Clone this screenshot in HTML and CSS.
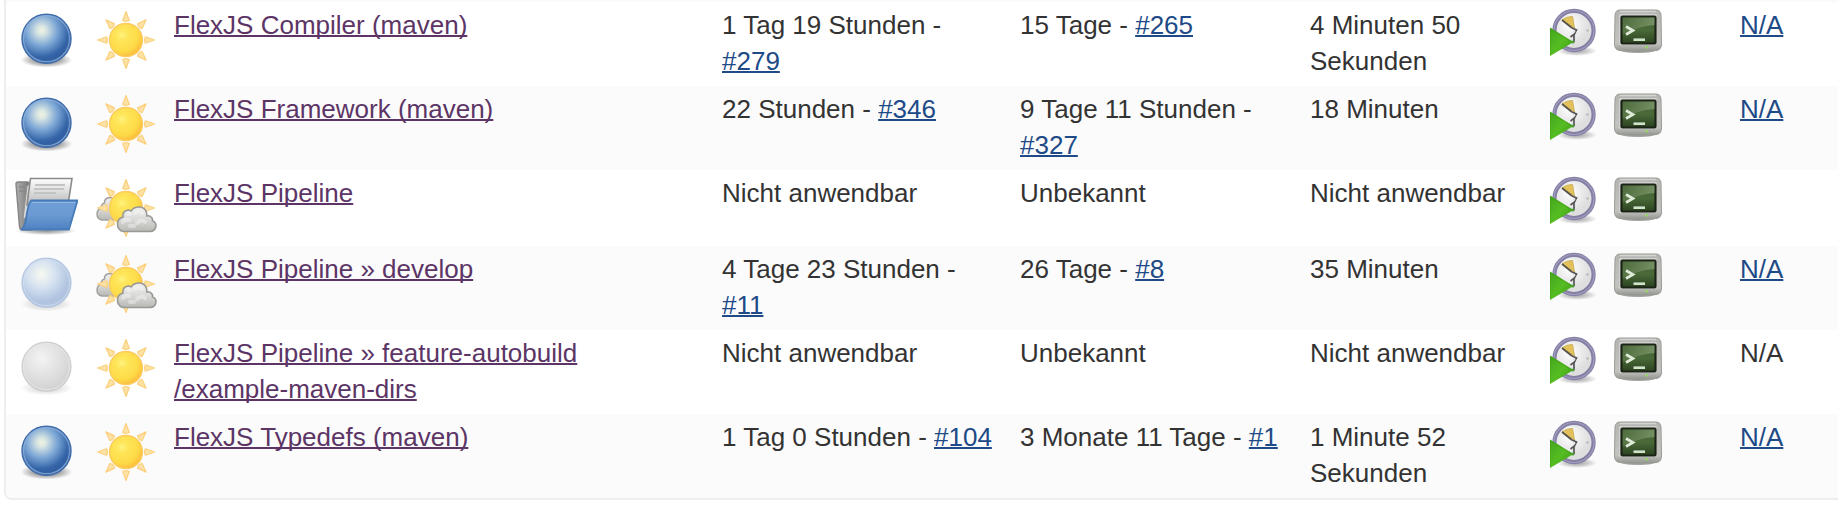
FILE: index.html
```html
<!DOCTYPE html>
<html lang="de">
<head>
<meta charset="utf-8">
<title>FlexJS Jobs</title>
<link rel="stylesheet" href="styles.css">
</head>
<body>
<svg class="sprite" aria-hidden="true">
  <defs>
    <radialGradient id="g-blue" cx=".4" cy=".33" r=".66"><stop offset="0" stop-color="#eff3df"/><stop offset=".13" stop-color="#dbe7e3"/><stop offset=".48" stop-color="#7ba6d5"/><stop offset=".82" stop-color="#3565a8"/><stop offset="1" stop-color="#2f5c9e"/></radialGradient>
    <radialGradient id="g-pale" cx=".4" cy=".33" r=".66"><stop offset="0" stop-color="#f8faf0"/><stop offset=".45" stop-color="#d3e0f0"/><stop offset=".85" stop-color="#b0c3e0"/><stop offset="1" stop-color="#b0c3e0"/></radialGradient>
    <radialGradient id="g-gray" cx=".4" cy=".33" r=".66"><stop offset="0" stop-color="#f3f3f3"/><stop offset=".5" stop-color="#e3e3e3"/><stop offset="1" stop-color="#d2d2d2"/></radialGradient>
    <radialGradient id="g-shadow"><stop offset="0" stop-color="#000" stop-opacity=".6"/><stop offset=".6" stop-color="#000" stop-opacity=".28"/><stop offset="1" stop-color="#000" stop-opacity="0"/></radialGradient>
    <radialGradient id="g-sun" cx=".38" cy=".35" r=".7"><stop offset="0" stop-color="#fff27e"/><stop offset=".25" stop-color="#fee559"/><stop offset=".7" stop-color="#fddb47"/><stop offset="1" stop-color="#fcb83a"/></radialGradient>
    <linearGradient id="g-cloud" x2="0" y2="1"><stop offset="0" stop-color="#f0f0f0"/><stop offset=".5" stop-color="#dadad8"/><stop offset="1" stop-color="#b8b8b5"/></linearGradient>
    <linearGradient id="g-folder" x2="0" y2="1"><stop offset="0" stop-color="#6f9fd6"/><stop offset=".5" stop-color="#6b9ad2"/><stop offset="1" stop-color="#4f82c2"/></linearGradient>
    <linearGradient id="g-back" x2="1"><stop offset="0" stop-color="#b0b0b0"/><stop offset="1" stop-color="#6c6c6c"/></linearGradient>
    <linearGradient id="g-paper" x2="0" y2="1"><stop offset="0" stop-color="#fff"/><stop offset="1" stop-color="#b9b9b9"/></linearGradient>
    <radialGradient id="g-face" cx=".4" cy=".35"><stop offset="0" stop-color="#fff"/><stop offset="1" stop-color="#dedede"/></radialGradient>
    <linearGradient id="g-play" x2="1" y2="1"><stop offset="0" stop-color="#43a51c"/><stop offset=".5" stop-color="#55bd22"/><stop offset="1" stop-color="#3c9613"/></linearGradient>
    <linearGradient id="g-case" x2="0" y2="1"><stop offset="0" stop-color="#b5b6b2"/><stop offset=".8" stop-color="#c2c3bf"/><stop offset="1" stop-color="#8f918b"/></linearGradient>
    <linearGradient id="g-screen" x2="0" y2="1"><stop offset="0" stop-color="#3f5c30"/><stop offset=".5" stop-color="#4a6a38"/><stop offset="1" stop-color="#2b4220"/></linearGradient>
    <linearGradient id="g-glare" x1="0" x2="1"><stop offset="0" stop-color="#9db58a" stop-opacity=".15"/><stop offset="1" stop-color="#a6bd94" stop-opacity=".5"/></linearGradient>
  </defs>
  <symbol id="ball-blue" viewBox="0 0 64 64"><ellipse cx="32.500" cy="52" rx="26" ry="7.500" fill="url(#g-shadow)"/><circle cx="32.500" cy="30.700" r="24.500" fill="url(#g-blue)" stroke="#3f6cab" stroke-width="1.400"/><circle cx="32.500" cy="30.700" r="23" fill="none" stroke="#8fb1dc" stroke-width="1.200" opacity=".75"/></symbol>
  <symbol id="ball-pale" viewBox="0 0 64 64"><ellipse cx="32.500" cy="52" rx="26" ry="7.500" fill="url(#g-shadow)" opacity=".3"/><circle cx="32.500" cy="30.700" r="24.500" fill="url(#g-pale)" stroke="#b3c5e0" stroke-width="1.200"/><circle cx="32.500" cy="30.700" r="23" fill="none" stroke="#d3dfef" opacity=".8"/></symbol>
  <symbol id="ball-gray" viewBox="0 0 64 64"><ellipse cx="32.500" cy="52" rx="26" ry="7.500" fill="url(#g-shadow)" opacity=".3"/><circle cx="32.500" cy="30.700" r="24.500" fill="url(#g-gray)" stroke="#cecece" stroke-width="1.200"/><circle cx="32.500" cy="30.700" r="23" fill="none" stroke="#e6e6e6"/></symbol>
  <symbol id="sun" viewBox="0 0 64 64">
    <g fill="#fce2a4" stroke="#fcd07f" stroke-width="1.200" stroke-linejoin="round">
      <path id="ray" d="M32 3.500 L35.300 12.500 Q32 14.500 28.700 12.500Z"/>
      <use href="#ray" transform="rotate(45 32 32)"/><use href="#ray" transform="rotate(90 32 32)"/><use href="#ray" transform="rotate(135 32 32)"/><use href="#ray" transform="rotate(180 32 32)"/><use href="#ray" transform="rotate(225 32 32)"/><use href="#ray" transform="rotate(270 32 32)"/><use href="#ray" transform="rotate(315 32 32)"/>
    </g>
    <circle cx="32" cy="32" r="16.500" fill="url(#g-sun)" stroke="#fccb62" stroke-width="1.400"/>
  </symbol>
  <symbol id="cloudy" viewBox="0 0 64 64">
    <path d="M8 44 Q3 43 3 38 Q3 33.500 7 32.500 Q7 28 10.500 27 Q10 22 16 21.500 Q23 22 24 29 L26 44Z" fill="url(#g-cloud)" stroke="#a2a29e" stroke-width="1.500"/>
    <use href="#sun"/>
    <path d="M29 55.500 Q23.500 54 23.500 48 Q23.500 42.500 29 41 Q28 35 34 34 Q36 34 37 35 Q40 30.500 46 31 Q53 32 53 40 Q56 39 58 42 Q59 43.500 58.500 45 Q62 46 62 50 Q61 55.500 56 55.500Z" fill="url(#g-cloud)" stroke="#999995" stroke-width="1.600"/>
    <path d="M29 46 Q31 43 35 44 M34 38 Q35 37 36 38 M41 37 Q44 34 48 37 M43 47 Q47 43 51 46 M36 50H40" fill="none" stroke="#fafafa" stroke-width="4" stroke-linecap="round" opacity=".4"/>
  </symbol>
  <symbol id="folder" viewBox="0 0 64 64">
    <ellipse cx="32" cy="55" rx="30" ry="4" fill="url(#g-shadow)" opacity=".7"/>
    <path d="M2 8 Q2 6 4 6 L14 6 L18 12 L18 54 L8 54 Q6 54 5.500 51Z" fill="url(#g-back)" stroke="#848484" stroke-width="1.400"/>
    <path d="M5 11H13M5 15H13" stroke="#888" stroke-width="1.500"/>
    <path d="M13 10 L17 7 L50 8 L48 30 L9 43Z" fill="#d9d9d9" stroke="#929292"/>
    <path d="M16.500 2.500 H58 L54 29 H13Z" fill="url(#g-paper)" stroke="#8b8b8b" stroke-width="1.600"/>
    <path d="M21 9H51M20 13H50M20 17H42" stroke="#c4c4c4" stroke-width="1.800"/>
    <path d="M17 24.500 H63.500 L55 53.500 H7.500 Q11 50 12 43 Q14 28 17 24.500Z" fill="url(#g-folder)" stroke="#477bb8" stroke-width="1.800" stroke-linejoin="round"/>
    <path d="M18.500 26.500H61" stroke="#91b9e6" stroke-width="1.200"/>
  </symbol>
  <symbol id="clock" viewBox="0 0 48 48">
    <ellipse cx="27" cy="43" rx="20" ry="5" fill="url(#g-shadow)" opacity=".6"/>
    <circle cx="24" cy="22.500" r="19.600" fill="url(#g-face)" stroke="#8480a5" stroke-width="4.200"/>
    <circle cx="24" cy="22.500" r="20" fill="none" stroke="#9f9cbd" stroke-width="1.200"/>
    <path d="M12 12 Q16 8.500 22.500 8.500 L24.500 20Z" fill="#e3c25c" stroke="#cfb059"/>
    <path d="M12 12 L22 20" stroke="#575347" stroke-width="1.800"/>
    <path d="M22 20 L26.500 22 L24.500 26 L20.500 29 M24 26V34" fill="none" stroke="#555" stroke-width="1.700"/>
    <circle cx="24" cy="23.500" r="1.300" fill="#e4e4e4"/>
    <circle cx="37.500" cy="22.500" r="1.200" fill="#b8b8b8"/>
    <path d="M0 19.500 L23.500 34 L0 48Z" fill="url(#g-play)"/>
    <path d="M0 48V20.500L22 34" fill="none" stroke="#348815" stroke-opacity=".4"/>
    <circle cx="23" cy="34" r="1.500" fill="#4c9a35"/>
  </symbol>
  <symbol id="terminal" viewBox="0 0 48 48">
    <path d="M4 41 H44 Q41 45 24 45 Q7 45 4 41Z" fill="#a9aaa5"/>
    <path d="M6 2 H42 Q46.500 2 47 7 L47.500 36 Q47.500 42 42 42.500 Q24 45 6 42.500 Q.5 42 .5 36 L1 7 Q1.500 2 6 2Z" fill="url(#g-case)" stroke="#999b95"/>
    <path d="M6 3.500H42" stroke="#d4d4d1" stroke-width="1.500"/>
    <rect x="5" y="6" width="38" height="31" rx="2" fill="#d0d1ce"/>
    <rect x="7.500" y="8.500" width="34" height="27" rx="1" fill="url(#g-screen)" stroke="#1b2417" stroke-width="2.200"/>
    <path d="M8.500 9.500H40.500V17Q24 18 8.500 27Z" fill="url(#g-glare)"/>
    <path d="M12 18.500 L19 22.500 L12 26.500" fill="none" stroke="#dfead9" stroke-width="2.600"/>
    <path d="M19.500 31.700H31" stroke="#d3e2cb" stroke-width="2.600"/>
    <circle cx="32.500" cy="39.200" r="1.300" fill="#91d85c"/>
  </symbol>
</svg>

<div class="panel">
<table class="jobs">
  <colgroup><col class="c-icon"><col class="c-icon"><col><col class="c-success"><col class="c-failure"><col class="c-duration"><col class="c-actions"><col class="c-coverage"></colgroup>
  <tbody>
    <tr>
      <td><svg class="icon" role="img" aria-label="Erfolgreich"><use href="#ball-blue"/></svg></td>
      <td><svg class="icon" role="img" aria-label="Sonnig"><use href="#sun"/></svg></td>
      <td><a class="job" href="#">FlexJS Compiler (maven)</a></td>
      <td>1 Tag 19 Stunden - <a href="#">#279</a></td>
      <td>15 Tage - <a href="#">#265</a></td>
      <td>4 Minuten 50 Sekunden</td>
      <td><div class="actions"><a href="#" aria-label="Build planen"><svg><use href="#clock"/></svg></a><a href="#" aria-label="Konsole"><svg><use href="#terminal"/></svg></a></div></td>
      <td><a href="#">N/A</a></td>
    </tr>
    <tr>
      <td><svg class="icon" role="img" aria-label="Erfolgreich"><use href="#ball-blue"/></svg></td>
      <td><svg class="icon" role="img" aria-label="Sonnig"><use href="#sun"/></svg></td>
      <td><a class="job" href="#">FlexJS Framework (maven)</a></td>
      <td>22 Stunden - <a href="#">#346</a></td>
      <td>9 Tage 11 Stunden - <a href="#">#327</a></td>
      <td>18 Minuten</td>
      <td><div class="actions"><a href="#" aria-label="Build planen"><svg><use href="#clock"/></svg></a><a href="#" aria-label="Konsole"><svg><use href="#terminal"/></svg></a></div></td>
      <td><a href="#">N/A</a></td>
    </tr>
    <tr>
      <td><svg class="icon" role="img" aria-label="Ordner"><use href="#folder"/></svg></td>
      <td><svg class="icon" role="img" aria-label="Bewölkt"><use href="#cloudy"/></svg></td>
      <td><a class="job" href="#">FlexJS Pipeline</a></td>
      <td>Nicht anwendbar</td>
      <td>Unbekannt</td>
      <td>Nicht anwendbar</td>
      <td><div class="actions"><a href="#" aria-label="Build planen"><svg><use href="#clock"/></svg></a><a href="#" aria-label="Konsole"><svg><use href="#terminal"/></svg></a></div></td>
      <td></td>
    </tr>
    <tr>
      <td><svg class="icon" role="img" aria-label="Läuft"><use href="#ball-pale"/></svg></td>
      <td><svg class="icon" role="img" aria-label="Bewölkt"><use href="#cloudy"/></svg></td>
      <td><a class="job" href="#">FlexJS Pipeline » develop</a></td>
      <td>4 Tage 23 Stunden - <a href="#">#11</a></td>
      <td>26 Tage - <a href="#">#8</a></td>
      <td>35 Minuten</td>
      <td><div class="actions"><a href="#" aria-label="Build planen"><svg><use href="#clock"/></svg></a><a href="#" aria-label="Konsole"><svg><use href="#terminal"/></svg></a></div></td>
      <td><a href="#">N/A</a></td>
    </tr>
    <tr>
      <td><svg class="icon" role="img" aria-label="Nicht gebaut"><use href="#ball-gray"/></svg></td>
      <td><svg class="icon" role="img" aria-label="Sonnig"><use href="#sun"/></svg></td>
      <td><a class="job" href="#">FlexJS Pipeline » feature-autobuild<br>/example-maven-dirs</a></td>
      <td>Nicht anwendbar</td>
      <td>Unbekannt</td>
      <td>Nicht anwendbar</td>
      <td><div class="actions"><a href="#" aria-label="Build planen"><svg><use href="#clock"/></svg></a><a href="#" aria-label="Konsole"><svg><use href="#terminal"/></svg></a></div></td>
      <td>N/A</td>
    </tr>
    <tr>
      <td><svg class="icon" role="img" aria-label="Erfolgreich"><use href="#ball-blue"/></svg></td>
      <td><svg class="icon" role="img" aria-label="Sonnig"><use href="#sun"/></svg></td>
      <td><a class="job" href="#">FlexJS Typedefs (maven)</a></td>
      <td>1 Tag 0 Stunden - <a href="#">#104</a></td>
      <td>3 Monate 11 Tage - <a href="#">#1</a></td>
      <td>1 Minute 52 Sekunden</td>
      <td><div class="actions"><a href="#" aria-label="Build planen"><svg><use href="#clock"/></svg></a><a href="#" aria-label="Konsole"><svg><use href="#terminal"/></svg></a></div></td>
      <td><a href="#">N/A</a></td>
    </tr>
  </tbody>
</table>
</div>
</body>
</html>
```

FILE: styles.css
```css
body {
  margin: 0;
  background: #fff;
  color: #333;
  font-family: "Liberation Sans", Helvetica, Arial, sans-serif;
  font-size: 26px;
  line-height: 36px;
}

.sprite {
  position: absolute;
  width: 0;
  height: 0;
}

.panel {
  margin-left: 4px;
  border-left: 2px solid #eee;
  border-bottom: 2px solid #eee;
  border-bottom-left-radius: 8px;
  overflow: hidden;
}

.jobs {
  width: 100%;
  table-layout: fixed;
  border-collapse: separate;
  border-spacing: 0;
  border-top: 2px solid #fafafa;
}

.jobs td {
  padding: 5px 8px 7px;
  vertical-align: top;
}

.jobs td:has(.icon),
.jobs td:has(.actions) {
  padding: 6px 8px;
}

.jobs tr:nth-child(even) {
  background: #fbfbfb;
}

.c-icon { width: 80px; }
.c-success { width: 298px; }
.c-failure { width: 290px; }
.c-duration { width: 240px; }
.c-actions { width: 190px; }
.c-coverage { width: 106px; }

a {
  color: #204a87;
  text-decoration-thickness: 2px;
  text-decoration-skip-ink: none;
}

.job {
  color: #5c3566;
}

.icon {
  display: block;
  width: 64px;
  height: 64px;
}

.actions {
  display: flex;
  gap: 16px;
}

.actions svg {
  display: block;
  width: 48px;
  height: 48px;
}
```
